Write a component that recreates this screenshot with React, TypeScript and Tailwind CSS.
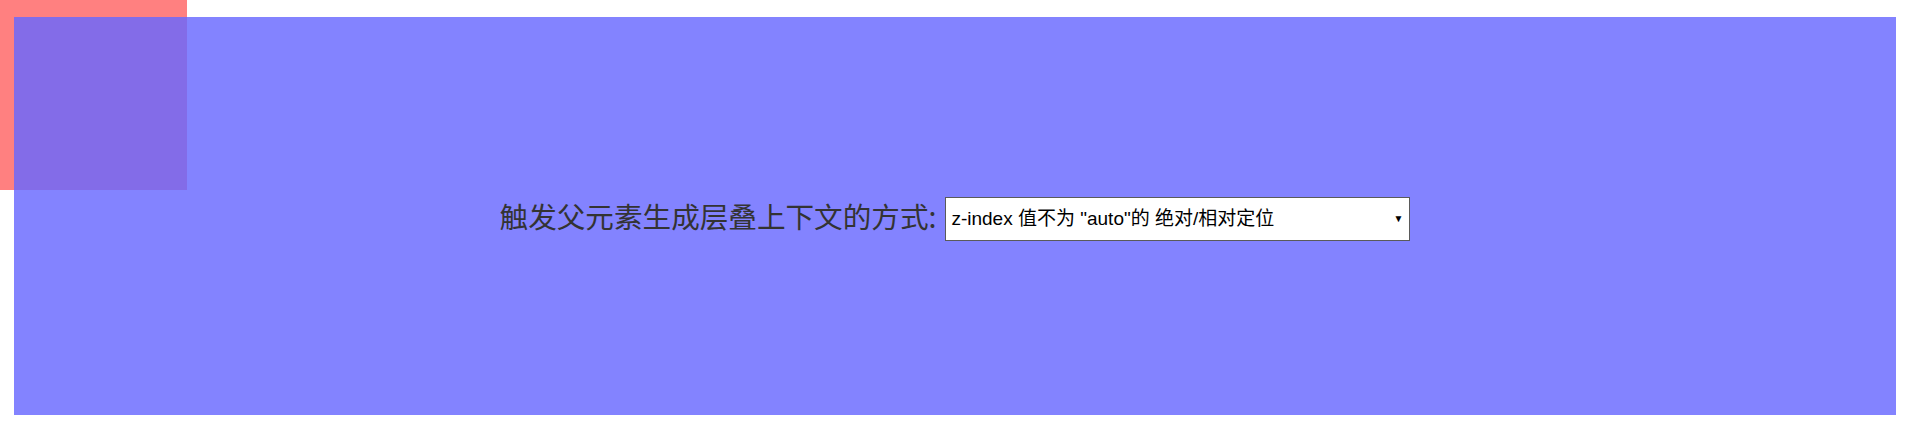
export default function App() {
  return (
    <div className="relative w-[1912px] h-[429px] bg-white overflow-hidden">
      <div className="absolute left-0 top-0 w-[187px] h-[190px] bg-[#ff8080]" />
      <div className="relative ml-[14px] pt-[17px]">
        <div className="w-[1882px] h-[398px] bg-[rgba(104,104,255,0.82)] flex items-center justify-center">
          <span
            className="text-[28.6px] leading-none text-[#333333] mr-[9px]"
            style={{ fontFamily: '"Noto Sans CJK SC", "Liberation Sans", sans-serif' }}
          >
            触发父元素生成层叠上下文的方式:
          </span>
          <div
            className="mt-[6px] w-[465px] h-[44px] bg-white border border-[#5a5a5a] flex items-center pl-[5px] pr-[6px] text-[19px] text-black"
            style={{ fontFamily: '"Liberation Sans", "Noto Sans CJK SC", sans-serif' }}
          >
            <span className="flex-1 whitespace-pre">z-index 值不为 "auto"的 绝对/相对定位</span>
            <span className="text-[10px] leading-none">▼</span>
          </div>
        </div>
      </div>
    </div>
  );
}
